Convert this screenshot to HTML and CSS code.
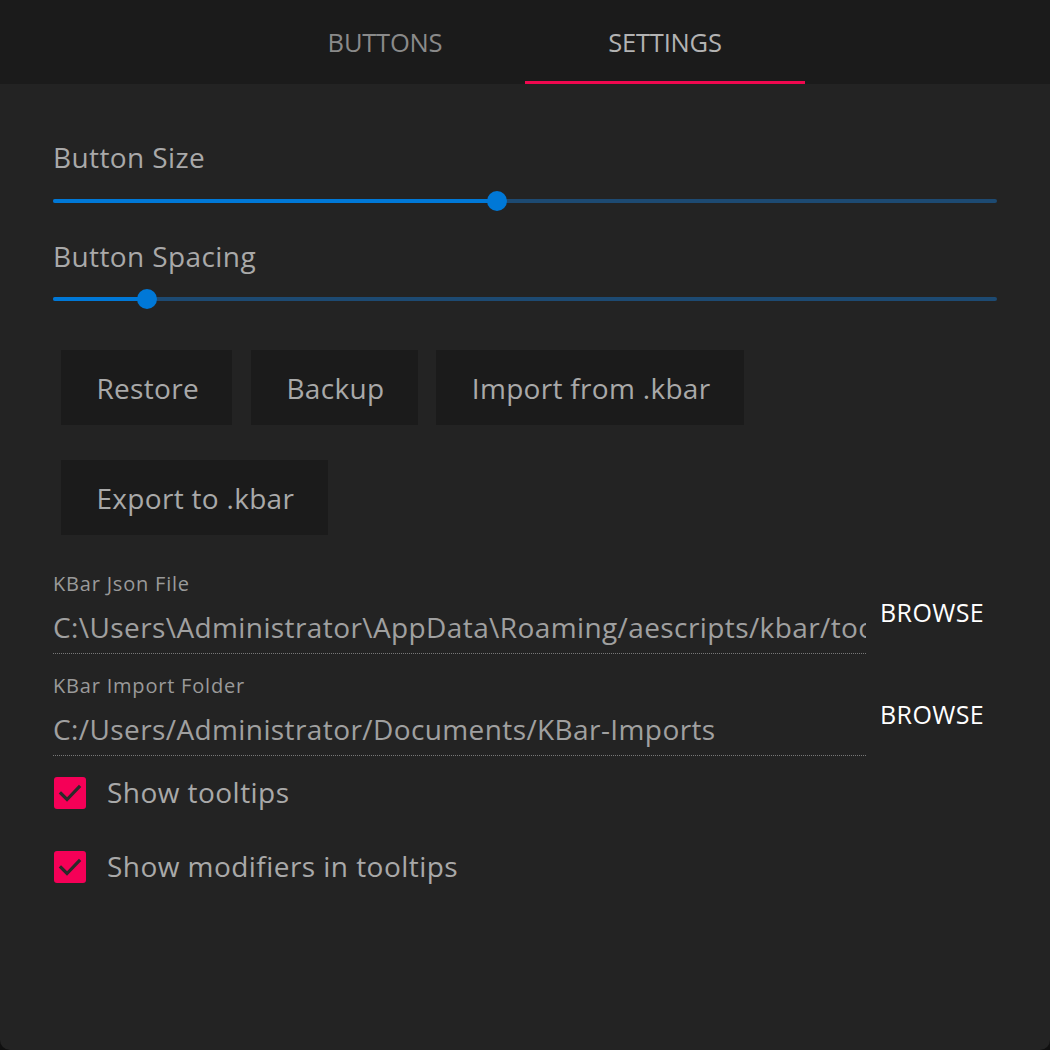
FILE: index.html
```html
<!DOCTYPE html>
<html lang="en">
<head>
<meta charset="utf-8">
<title>KBar Settings</title>
<link rel="stylesheet" href="styles.css">
</head>
<body>
<div class="window">
  <nav class="tabs">
    <div class="tab">BUTTONS</div>
    <div class="tab active">SETTINGS</div>
  </nav>
  <main class="content">
    <div class="label">Button Size</div>
    <div class="slider">
      <div class="track"></div>
      <div class="fill" style="width: 47%"></div>
      <div class="thumb" style="left: 47%"></div>
    </div>
    <div class="label label-second">Button Spacing</div>
    <div class="slider slider-second">
      <div class="track"></div>
      <div class="fill" style="width: 10%"></div>
      <div class="thumb" style="left: 10%"></div>
    </div>

    <div class="button-rows">
      <div class="button-row">
        <button class="btn">Restore</button>
        <button class="btn">Backup</button>
        <button class="btn">Import from .kbar</button>
      </div>
      <div class="button-row">
        <button class="btn">Export to .kbar</button>
      </div>
    </div>

    <div class="field">
      <div class="field-main">
        <div class="field-label">KBar Json File</div>
        <div class="field-input">C:\Users\Administrator\AppData\Roaming/aescripts/kbar/toolbars.json</div>
      </div>
      <div class="browse">BROWSE</div>
    </div>
    <div class="field field-second">
      <div class="field-main">
        <div class="field-label">KBar Import Folder</div>
        <div class="field-input">C:/Users/Administrator/Documents/KBar-Imports</div>
      </div>
      <div class="browse">BROWSE</div>
    </div>

    <label class="check">
      <span class="box"><svg viewBox="0 0 32 32" width="32" height="32"><path d="M7 16.5 L13 22.5 L25 10" fill="none" stroke="#2a2a2a" stroke-width="3.2" stroke-linecap="square"/></svg></span>
      <span class="check-text">Show tooltips</span>
    </label>
    <label class="check">
      <span class="box"><svg viewBox="0 0 32 32" width="32" height="32"><path d="M7 16.5 L13 22.5 L25 10" fill="none" stroke="#2a2a2a" stroke-width="3.2" stroke-linecap="square"/></svg></span>
      <span class="check-text">Show modifiers in tooltips</span>
    </label>
  </main>
</div>
</body>
</html>
```

FILE: styles.css
```css
* { box-sizing: border-box; }

html, body {
  margin: 0;
  padding: 0;
  background: #101010;
}

body {
  font-family: "Segoe UI", "Open Sans", "Noto Sans", sans-serif;
  color: #a9a9a9;
}

.window {
  width: 1050px;
  height: 1050px;
  background: #232323;
  border-radius: 0 0 10px 10px;
  overflow: hidden;
  display: flex;
  flex-direction: column;
}

.tabs {
  height: 84px;
  background: #1b1b1b;
  display: flex;
  justify-content: center;
  flex-shrink: 0;
}

.tab {
  width: 280px;
  height: 84px;
  text-align: center;
  font-size: 25.5px;
  line-height: 26px;
  padding-top: 29px;
  color: #8a8a8a;
  letter-spacing: -0.2px;
  border-bottom: 3px solid transparent;
}

.tab.active {
  color: #b3b3b3;
  border-bottom-color: #f0084f;
}

.content {
  padding: 56px 53px 0 53px;
  display: flex;
  flex-direction: column;
}

.label {
  font-size: 28px;
  line-height: 34px;
  height: 34px;
  color: #a9a9a9;
  letter-spacing: 0.4px;
}

.label-second {
  margin-top: 28px;
}

.slider {
  position: relative;
  height: 20px;
  margin-top: 17px;
}

.slider-second {
  margin-top: 16px;
}

.track {
  position: absolute;
  left: 0;
  right: 0;
  top: 8px;
  height: 4px;
  background: #1d4a72;
  border-radius: 2px;
}

.fill {
  position: absolute;
  left: 0;
  top: 8px;
  height: 4px;
  background: #0078d7;
  border-radius: 2px;
}

.thumb {
  position: absolute;
  top: 0;
  width: 20px;
  height: 20px;
  margin-left: -10px;
  border-radius: 50%;
  background: #0078d7;
}

.button-rows {
  margin-top: 41px;
  padding-left: 8px;
  display: flex;
  flex-direction: column;
  gap: 35px;
}

.button-row {
  display: flex;
  gap: 18.5px;
}

.btn {
  height: 75px;
  padding: 0 33.5px 0 35.5px;
  background: #1b1b1b;
  border: none;
  border-radius: 0;
  font-family: inherit;
  font-size: 28px;
  color: #a9a9a9;
  letter-spacing: 0.3px;
}

.field {
  display: flex;
  align-items: flex-start;
  margin-top: 37px;
}

.field-second {
  margin-top: 20px;
}

.field-main {
  width: 813px;
  flex-shrink: 0;
}

.field-label {
  font-size: 20px;
  line-height: 24px;
  color: #9a9a9a;
  letter-spacing: 0.8px;
}

.field-input {
  font-size: 28px;
  line-height: 34px;
  margin-top: 14px;
  padding-bottom: 9px;
  color: #a0a0a0;
  white-space: nowrap;
  overflow: hidden;
  border-bottom: 1px dotted #777;
  letter-spacing: 0.4px;
}

.browse {
  margin-left: 14px;
  margin-top: 26px;
  font-size: 25px;
  line-height: 28px;
  color: #ffffff;
  letter-spacing: 0.4px;
}

.check {
  display: flex;
  align-items: center;
  height: 32px;
  gap: 21px;
  margin-top: 21px;
}

.check + .check {
  margin-top: 42px;
}

.box {
  width: 32px;
  height: 32px;
  background: #f50057;
  border-radius: 3px;
  display: block;
  margin-left: 1px;
}

.box svg {
  display: block;
}

.check-text {
  font-size: 28px;
  line-height: 34px;
  margin-top: -2px;
  color: #a9a9a9;
  letter-spacing: 0.45px;
}
```
